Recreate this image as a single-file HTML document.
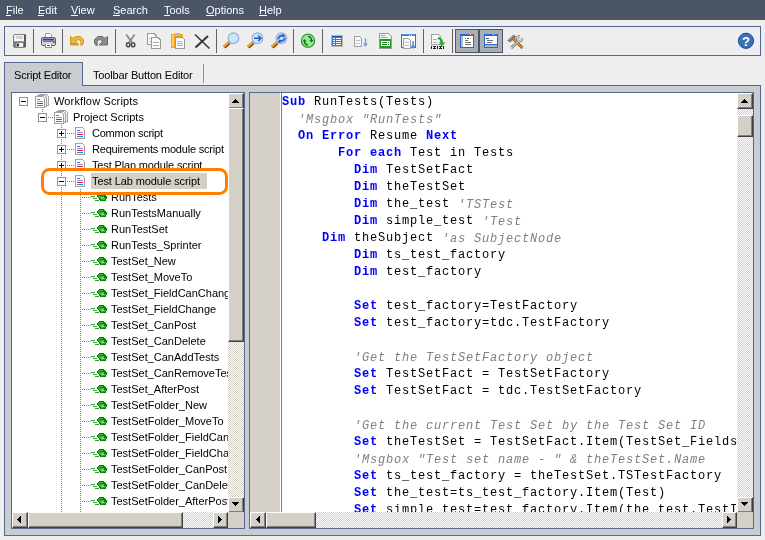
<!DOCTYPE html><html><head><meta charset="utf-8"><style>
*{margin:0;padding:0;box-sizing:border-box}
html,body{width:765px;height:540px;overflow:hidden;background:#eeeeee;font-family:"Liberation Sans",sans-serif;font-size:11px;color:#000}
.a{position:absolute}
#menu{left:0;top:0;width:765px;height:20px;background:#4a5565;color:#fff}
#menu span{position:absolute;top:4px;line-height:12px;will-change:transform}
#menu i{position:absolute;height:1px;background:#fff;top:15px}
.sep{position:absolute;top:29px;width:1px;height:24px;background:#606060}
.t{position:absolute;white-space:nowrap;line-height:16px;height:16px;will-change:transform}
.btn{position:absolute;width:16px;height:16px;background:#d4d0c8;border-top:1px solid #fff;border-left:1px solid #fff;border-right:1px solid #404040;border-bottom:1px solid #404040;box-shadow:inset -1px -1px 0 #808080}
.chk{position:absolute;background:repeating-conic-gradient(#d4d0c8 0 25%,#fff 0 50%) 0 0/2px 2px}
.code{position:absolute;will-change:transform;font-family:"Liberation Mono",monospace;font-size:12px;letter-spacing:0.8px;line-height:17px;white-space:pre}
.k{color:#0000ff;font-weight:bold}
.c{color:#808080;font-style:italic;position:relative;top:1px}
svg{position:absolute;overflow:visible}
</style></head><body><div id="menu" class="a"><span style="left:6px">File</span><i style="left:6px;width:5px"></i><span style="left:38px">Edit</span><i style="left:38px;width:6px"></i><span style="left:71px">View</span><i style="left:71px;width:7px"></i><span style="left:113px">Search</span><i style="left:113px;width:7px"></i><span style="left:164px">Tools</span><i style="left:164px;width:6px"></i><span style="left:206px">Options</span><i style="left:206px;width:8px"></i><span style="left:259px">Help</span><i style="left:259px;width:8px"></i></div><div class="a" style="left:4px;top:26px;width:757px;height:30px;border:1px solid #56688f;background:#eeeeee"></div><div class="sep" style="left:33px"></div><div class="sep" style="left:62px"></div><div class="sep" style="left:115px"></div><div class="sep" style="left:216px"></div><div class="sep" style="left:293px"></div><div class="sep" style="left:322px"></div><div class="sep" style="left:423px"></div><div class="sep" style="left:452px"></div><div class="a" style="left:455px;top:29px;width:48px;height:24px;background:#a9adb4;border:1px solid #4b5567"></div><div class="a" style="left:478px;top:29px;width:2px;height:24px;background:#4b5567"></div>
<svg style="left:0;top:0" width="765" height="60" viewBox="0 0 765 60">
 <!-- save (disabled) -->
 <g shape-rendering="crispEdges">
  <rect x="13" y="34" width="13" height="14" fill="#808080"/>
  <rect x="13" y="34" width="1" height="1" fill="#ececec"/><rect x="25" y="47" width="1" height="1" fill="#ececec"/><rect x="13" y="47" width="1" height="1" fill="#ececec"/>
  <rect x="24" y="35" width="2" height="12" fill="#5a5a5a"/>
  <rect x="14" y="35" width="10" height="6" fill="#f6f6f6"/>
  <rect x="16" y="36" width="7" height="3" fill="#d4d4d4"/>
  <rect x="14" y="41" width="10" height="1" fill="#9a9a9a"/>
  <rect x="16" y="43" width="7" height="4" fill="#f0f0f0"/>
  <rect x="16" y="43" width="3" height="4" fill="#a0a0a0"/>
  <rect x="17" y="44" width="2" height="2" fill="#3a3a3a"/>
 </g>
 <!-- printer -->
 <path d="M45.5 33.5 H50 L51.5 35 V39.5 H45.5 Z" fill="#fff" stroke="#9a9a9a"/>
 <rect x="41.5" y="37.5" width="14" height="8" rx="1.5" fill="#b8b8b8" stroke="#5e5e5e"/>
 <g shape-rendering="crispEdges">
  <rect x="42" y="38" width="13" height="1" fill="#9a9aa8"/>
  <rect x="43" y="39" width="11" height="1" fill="#3c3c78"/>
  <rect x="43" y="40" width="11" height="2" fill="#8470c4"/>
  <rect x="42" y="42" width="13" height="3" fill="#d0d0d0"/>
  <rect x="53" y="41" width="2" height="2" fill="#18c018"/>
  <rect x="45" y="44" width="7" height="4" fill="#fff"/>
  <rect x="45" y="47" width="7" height="1" fill="#8a8a8a"/>
  <rect x="45" y="44" width="1" height="4" fill="#8a8a8a"/><rect x="51" y="44" width="1" height="4" fill="#8a8a8a"/>
  <rect x="47" y="45" width="3" height="1" fill="#505050"/>
 </g>
 <!-- undo -->
 <path d="M70.5 36.5 L73 38.5 L75.5 36.5 L80 36.5 L83.5 39.5 L83.5 43 L81.5 46 L80.5 44.5 L81.2 42 L80 39.8 L77.5 39.8 L75.3 41.3 L79 45 L70.5 45 Z" fill="#eab450" stroke="#d8980c" stroke-width="1" stroke-linejoin="round"/>
 <rect x="71" y="43" width="6.5" height="1.6" fill="#c49070"/>
 <g transform="translate(178 0) scale(-1 1)">
 <path d="M70.5 36.5 L73 38.5 L75.5 36.5 L80 36.5 L83.5 39.5 L83.5 43 L81.5 46 L80.5 44.5 L81.2 42 L80 39.8 L77.5 39.8 L75.3 41.3 L79 45 L70.5 45 Z" fill="#8c8c8c" stroke="#6a6a6a" stroke-width="1" stroke-linejoin="round"/>
 </g>
 <!-- scissors -->
 <g fill="none">
  <path d="M126.2 34.5 L132 42.5" stroke="#8a8a8a" stroke-width="1.8"/>
  <path d="M134.6 34.5 L129 42.5" stroke="#8a8a8a" stroke-width="1.8"/>
  <ellipse cx="128.2" cy="44.8" rx="1.7" ry="2" stroke="#4e4e4e" stroke-width="1.6"/>
  <ellipse cx="133.1" cy="44.8" rx="1.7" ry="2" stroke="#4e4e4e" stroke-width="1.6"/>
 </g>
 <!-- copy -->
 <g shape-rendering="crispEdges">
  <path d="M147.5 33.5 H154 L156.5 36 V44.5 H147.5 Z" fill="#fafafa" stroke="#999"/>
  <path d="M151.5 37.5 H158 L160.5 40 V48.5 H151.5 Z" fill="#fafafa" stroke="#999"/>
  <rect x="153" y="42" width="6" height="1" fill="#b0b0b0"/>
  <rect x="153" y="45" width="6" height="1" fill="#b0b0b0"/>
  <rect x="149" y="38" width="2" height="1" fill="#c0c0c0"/>
  <rect x="149" y="41" width="2" height="1" fill="#c0c0c0"/>
 </g>
 <!-- paste -->
 <g shape-rendering="crispEdges">
  <rect x="171" y="34" width="12" height="14" rx="1" fill="#f0a818"/>
  <rect x="172" y="35" width="2" height="12" fill="#fcd060"/>
  <rect x="175" y="33" width="5" height="3" fill="#b8b8b8"/>
  <path d="M175.5 37.5 H182.5 L184.5 39.5 V48.5 H175.5 Z" fill="#fafafa" stroke="#999"/>
  <rect x="177" y="41" width="5" height="1" fill="#b0b0b0"/>
  <rect x="177" y="43" width="6" height="1" fill="#b0b0b0"/>
  <rect x="177" y="45" width="6" height="1" fill="#b0b0b0"/>
 </g>
 <!-- delete -->
 <path d="M195 34.5 L209.5 48.5" stroke="#333" stroke-width="1.5"/>
 <path d="M208 36 L195.5 47.5" stroke="#333" stroke-width="2"/>
 <!-- magnifiers -->
 <g id="mag">
  <circle cx="233.4" cy="38.3" r="5.3" fill="#c4eafa" stroke="#a8acde" stroke-width="1.3"/>
  <path d="M224.3 47.2 L229.3 42.7" stroke="#6a4010" stroke-width="3.4"/>
  <path d="M224 46.6 L229 42.1" stroke="#f49a2a" stroke-width="2.2"/>
 </g>
 <use href="#mag" x="24"/>
 <path d="M254 38.3 H260.8 M258.2 35.6 L261 38.3 L258.2 41" fill="none" stroke="#1a5ad8" stroke-width="1.4"/>
 <use href="#mag" x="48"/>
 <path d="M278.2 39.5 Q278.5 35.2 283.5 35.6" fill="none" stroke="#2a66d8" stroke-width="2"/>
 <path d="M282.5 33.8 L285.2 35.8 L282.8 37.8 Z" fill="#1850c0"/>
 <path d="M284.8 37.5 Q284.5 41.5 279.5 41.2" fill="none" stroke="#2a66d8" stroke-width="2"/>
 <path d="M280.5 39.2 L277.8 41.2 L280.2 43.2 Z" fill="#1850c0"/>
 <!-- refresh -->
 <circle cx="308" cy="40.8" r="6.6" fill="#98e898" stroke="#3a9a3a" stroke-width="1.3"/>
 <path d="M304.5 41 Q304.5 44.5 308 45" fill="none" stroke="#107010" stroke-width="1.5"/>
 <path d="M302.5 41.5 L304.5 39 L306.5 41.5 Z" fill="#107010"/>
 <path d="M311.5 40.5 Q311.5 37 308 36.5" fill="none" stroke="#107010" stroke-width="1.5"/>
 <path d="M313.5 40 L311.5 42.5 L309.5 40 Z" fill="#107010"/>
 <!-- list -->
 <g shape-rendering="crispEdges">
  <rect x="331" y="35" width="12" height="12" fill="#c0b8a8"/>
  <rect x="332" y="36" width="10" height="10" fill="#1e7ee8"/>
  <rect x="332" y="36" width="10" height="1" fill="#0a5ac8"/>
  <rect x="333" y="38" width="2" height="1" fill="#fff"/><rect x="336" y="38" width="5" height="1" fill="#fff"/>
  <rect x="333" y="40" width="2" height="1" fill="#fff"/><rect x="336" y="40" width="5" height="1" fill="#fff"/>
  <rect x="333" y="42" width="2" height="1" fill="#fff"/><rect x="336" y="42" width="5" height="1" fill="#fff"/>
  <rect x="333" y="44" width="2" height="1" fill="#fff"/><rect x="336" y="44" width="5" height="1" fill="#fff"/>
 </g>
 <!-- doc + arrow -->
 <g shape-rendering="crispEdges">
  <path d="M354.5 36.5 H359.5 L361.5 38.5 V46.5 H354.5 Z" fill="#f8f8f8" stroke="#a0a0a0"/>
  <rect x="356" y="40" width="4" height="1" fill="#c0c0c0"/>
  <rect x="356" y="43" width="4" height="1" fill="#c0c0c0"/>
 </g>
 <path d="M365.5 38.5 V46" stroke="#7aa0d8" stroke-width="1.5"/>
 <path d="M363 43.5 L365.5 47 L368 43.5 Z" fill="#7aa0d8"/>
 <!-- green form -->
 <g shape-rendering="crispEdges">
  <path d="M379.5 33.5 H388.5 L391.5 36.5 V48.5 H379.5 Z" fill="#f6f6f6" stroke="#9a9a9a"/>
  <rect x="381" y="35" width="4" height="1" fill="#a0a0a0"/>
  <rect x="381" y="37" width="6" height="1" fill="#a0a0a0"/>
  <rect x="380" y="39" width="11" height="9" fill="#1c9c1c"/>
  <rect x="381" y="41" width="9" height="5" fill="#fff"/>
  <rect x="382" y="42" width="5" height="1" fill="#207020"/>
  <rect x="382" y="44" width="5" height="1" fill="#207020"/>
  <rect x="388" y="42" width="1" height="1" fill="#207020"/>
  <rect x="388" y="44" width="1" height="1" fill="#207020"/>
 </g>
 <!-- window with doc -->
 <g shape-rendering="crispEdges">
  <rect x="401" y="34" width="15" height="14" fill="#2a6ee0"/>
  <rect x="402" y="36" width="13" height="11" fill="#fff"/>
  <rect x="402" y="34" width="13" height="1" fill="#5a9af0"/>
  <rect x="409" y="35" width="1" height="1" fill="#d8e8ff"/><rect x="411" y="35" width="1" height="1" fill="#d8e8ff"/><rect x="413" y="35" width="2" height="1" fill="#f06030"/>
  <path d="M403.5 38.5 H408.5 L410.5 40.5 V48.5 H403.5 Z" fill="#f8f8f8" stroke="#a0a0a0"/>
  <rect x="405" y="42" width="4" height="1" fill="#c0c0c0"/>
  <rect x="405" y="45" width="4" height="1" fill="#c0c0c0"/>
  <rect x="412" y="41" width="2" height="5" fill="#7aa4e0"/>
 </g>
 <path d="M410.5 45.5 L416.5 45.5 L413 49 Z" fill="#5a8ee0"/>
 <!-- doc green arrow 1010 -->
 <g shape-rendering="crispEdges">
  <path d="M431.5 34.5 H438.5 L440.5 36.5 V44.5 H431.5 Z" fill="#f8f8f8" stroke="#a0a0a0"/>
  <rect x="433" y="39" width="4" height="1" fill="#b0b0b0"/>
  <rect x="433" y="42" width="4" height="1" fill="#b0b0b0"/>
 </g>
 <path d="M438 38 Q442 39 442 43" fill="none" stroke="#20a020" stroke-width="2"/>
 <path d="M438.5 42.5 L442 46.5 L445.5 42.5 Z" fill="#30b030"/>
 <g shape-rendering="crispEdges" fill="#202020">
  <rect x="431" y="46" width="1" height="3"/><rect x="433" y="46" width="3" height="1"/><rect x="433" y="48" width="3" height="1"/><rect x="434" y="47" width="1" height="1"/>
  <rect x="437" y="46" width="1" height="3"/><rect x="439" y="46" width="3" height="1"/><rect x="439" y="48" width="3" height="1"/><rect x="440" y="47" width="1" height="1"/>
  <rect x="443" y="46" width="1" height="3"/>
 </g>
 <!-- pressed window 1 -->
 <g shape-rendering="crispEdges">
  <rect x="460" y="34" width="14" height="14" rx="1" fill="#2a66d0"/>
  <rect x="461" y="36" width="12" height="11" fill="#fff"/>
  <rect x="461" y="36" width="2" height="11" fill="#b8b8c0"/>
  <rect x="470" y="34" width="1" height="1" fill="#e0e8ff"/><rect x="472" y="34" width="1" height="1" fill="#f06030"/>
  <rect x="465" y="38" width="1" height="1" fill="#505050"/><rect x="467" y="38" width="2" height="1" fill="#505050"/>
  <rect x="465" y="40" width="3" height="1" fill="#707070"/>
  <rect x="465" y="42" width="6" height="1" fill="#707070"/>
  <rect x="465" y="44" width="6" height="1" fill="#707070"/>
 </g>
 <!-- pressed window 2 -->
 <g shape-rendering="crispEdges">
  <rect x="484" y="34" width="14" height="14" rx="1" fill="#2a66d0"/>
  <rect x="485" y="36" width="12" height="8" fill="#fff"/>
  <rect x="485" y="45" width="12" height="2" fill="#b4b4b4"/>
  <rect x="493" y="34" width="1" height="1" fill="#e0e8ff"/><rect x="495" y="34" width="1" height="1" fill="#f06030"/>
  <rect x="486" y="38" width="3" height="1" fill="#505050"/>
  <rect x="487" y="40" width="6" height="1" fill="#707070"/>
  <rect x="487" y="42" width="5" height="1" fill="#707070"/>
 </g>
 <!-- tools -->
 <path d="M507 40.5 L513.5 34.5 L516.5 36.5 L510 42.5 Z" fill="#7a7a7a"/>
 <path d="M508.5 40 L513.5 35.5" stroke="#e0e0e0" stroke-width="1" stroke-dasharray="1 1"/>
 <path d="M513 38.5 L522.5 48" stroke="#8a4a00" stroke-width="2.8"/>
 <path d="M513 38.5 L522.5 48" stroke="#e09a30" stroke-width="1.4"/>
 <path d="M518 42 L511 48" stroke="#909090" stroke-width="3"/>
 <path d="M518 42 L511 48" stroke="#f0f0f0" stroke-width="1.2" stroke-dasharray="1 1"/>
 <path d="M522 38 A2.5 2.5 0 1 1 520 36.3" fill="none" stroke="#7a8a7a" stroke-width="2.4"/>
 <path d="M522 38 A2.5 2.5 0 1 1 520 36.3" fill="none" stroke="#e8eee8" stroke-width="1"/>
 <!-- help -->
 <circle cx="746" cy="40.8" r="7.6" fill="#3b72bc" stroke="#1c4c94" stroke-width="1"/>
 <text x="746" y="45.5" text-anchor="middle" font-family="Liberation Sans" font-weight="bold" font-size="13" fill="#fff">?</text>
</svg>
<div class="a" style="left:4px;top:85px;width:757px;height:451px;border:1px solid #56688f;background:#c9ccd1"></div><div class="a" style="left:4px;top:62px;width:79px;height:24px;border:1px solid #56688f;border-bottom:none;background:#c9ccd1"></div><div class="t" style="left:14px;top:67px;letter-spacing:-0.2px">Script Editor</div><div class="t" style="left:93px;top:67px;letter-spacing:-0.15px">Toolbar Button Editor</div><div class="a" style="left:203px;top:64px;width:1px;height:19px;background:#8090b0"></div><div class="a" style="left:11px;top:92px;width:234px;height:437px;border:1px solid #56688f;background:#fff"></div><div class="a" style="left:12px;top:93px;width:232px;height:435px;overflow:hidden"><div class="a" style="left:79px;top:80px;width:116px;height:16px;background:#d4d0c8"></div><svg style="left:0;top:0" width="232" height="435"><g fill="#808080" shape-rendering="crispEdges"><rect x="30" y="16" width="1" height="1"/><rect x="30" y="18" width="1" height="1"/><rect x="49" y="32" width="1" height="1"/><rect x="49" y="34" width="1" height="1"/><rect x="49" y="36" width="1" height="1"/><rect x="49" y="38" width="1" height="1"/><rect x="49" y="40" width="1" height="1"/><rect x="49" y="42" width="1" height="1"/><rect x="49" y="44" width="1" height="1"/><rect x="49" y="46" width="1" height="1"/><rect x="49" y="48" width="1" height="1"/><rect x="49" y="50" width="1" height="1"/><rect x="49" y="52" width="1" height="1"/><rect x="49" y="54" width="1" height="1"/><rect x="49" y="56" width="1" height="1"/><rect x="49" y="58" width="1" height="1"/><rect x="49" y="60" width="1" height="1"/><rect x="49" y="62" width="1" height="1"/><rect x="49" y="64" width="1" height="1"/><rect x="49" y="66" width="1" height="1"/><rect x="49" y="68" width="1" height="1"/><rect x="49" y="70" width="1" height="1"/><rect x="49" y="72" width="1" height="1"/><rect x="49" y="74" width="1" height="1"/><rect x="49" y="76" width="1" height="1"/><rect x="49" y="78" width="1" height="1"/><rect x="49" y="80" width="1" height="1"/><rect x="49" y="82" width="1" height="1"/><rect x="49" y="84" width="1" height="1"/><rect x="49" y="86" width="1" height="1"/><rect x="49" y="88" width="1" height="1"/><rect x="49" y="90" width="1" height="1"/><rect x="49" y="92" width="1" height="1"/><rect x="49" y="94" width="1" height="1"/><rect x="49" y="96" width="1" height="1"/><rect x="49" y="98" width="1" height="1"/><rect x="49" y="100" width="1" height="1"/><rect x="49" y="102" width="1" height="1"/><rect x="49" y="104" width="1" height="1"/><rect x="49" y="106" width="1" height="1"/><rect x="49" y="108" width="1" height="1"/><rect x="49" y="110" width="1" height="1"/><rect x="49" y="112" width="1" height="1"/><rect x="49" y="114" width="1" height="1"/><rect x="49" y="116" width="1" height="1"/><rect x="49" y="118" width="1" height="1"/><rect x="49" y="120" width="1" height="1"/><rect x="49" y="122" width="1" height="1"/><rect x="49" y="124" width="1" height="1"/><rect x="49" y="126" width="1" height="1"/><rect x="49" y="128" width="1" height="1"/><rect x="49" y="130" width="1" height="1"/><rect x="49" y="132" width="1" height="1"/><rect x="49" y="134" width="1" height="1"/><rect x="49" y="136" width="1" height="1"/><rect x="49" y="138" width="1" height="1"/><rect x="49" y="140" width="1" height="1"/><rect x="49" y="142" width="1" height="1"/><rect x="49" y="144" width="1" height="1"/><rect x="49" y="146" width="1" height="1"/><rect x="49" y="148" width="1" height="1"/><rect x="49" y="150" width="1" height="1"/><rect x="49" y="152" width="1" height="1"/><rect x="49" y="154" width="1" height="1"/><rect x="49" y="156" width="1" height="1"/><rect x="49" y="158" width="1" height="1"/><rect x="49" y="160" width="1" height="1"/><rect x="49" y="162" width="1" height="1"/><rect x="49" y="164" width="1" height="1"/><rect x="49" y="166" width="1" height="1"/><rect x="49" y="168" width="1" height="1"/><rect x="49" y="170" width="1" height="1"/><rect x="49" y="172" width="1" height="1"/><rect x="49" y="174" width="1" height="1"/><rect x="49" y="176" width="1" height="1"/><rect x="49" y="178" width="1" height="1"/><rect x="49" y="180" width="1" height="1"/><rect x="49" y="182" width="1" height="1"/><rect x="49" y="184" width="1" height="1"/><rect x="49" y="186" width="1" height="1"/><rect x="49" y="188" width="1" height="1"/><rect x="49" y="190" width="1" height="1"/><rect x="49" y="192" width="1" height="1"/><rect x="49" y="194" width="1" height="1"/><rect x="49" y="196" width="1" height="1"/><rect x="49" y="198" width="1" height="1"/><rect x="49" y="200" width="1" height="1"/><rect x="49" y="202" width="1" height="1"/><rect x="49" y="204" width="1" height="1"/><rect x="49" y="206" width="1" height="1"/><rect x="49" y="208" width="1" height="1"/><rect x="49" y="210" width="1" height="1"/><rect x="49" y="212" width="1" height="1"/><rect x="49" y="214" width="1" height="1"/><rect x="49" y="216" width="1" height="1"/><rect x="49" y="218" width="1" height="1"/><rect x="49" y="220" width="1" height="1"/><rect x="49" y="222" width="1" height="1"/><rect x="49" y="224" width="1" height="1"/><rect x="49" y="226" width="1" height="1"/><rect x="49" y="228" width="1" height="1"/><rect x="49" y="230" width="1" height="1"/><rect x="49" y="232" width="1" height="1"/><rect x="49" y="234" width="1" height="1"/><rect x="49" y="236" width="1" height="1"/><rect x="49" y="238" width="1" height="1"/><rect x="49" y="240" width="1" height="1"/><rect x="49" y="242" width="1" height="1"/><rect x="49" y="244" width="1" height="1"/><rect x="49" y="246" width="1" height="1"/><rect x="49" y="248" width="1" height="1"/><rect x="49" y="250" width="1" height="1"/><rect x="49" y="252" width="1" height="1"/><rect x="49" y="254" width="1" height="1"/><rect x="49" y="256" width="1" height="1"/><rect x="49" y="258" width="1" height="1"/><rect x="49" y="260" width="1" height="1"/><rect x="49" y="262" width="1" height="1"/><rect x="49" y="264" width="1" height="1"/><rect x="49" y="266" width="1" height="1"/><rect x="49" y="268" width="1" height="1"/><rect x="49" y="270" width="1" height="1"/><rect x="49" y="272" width="1" height="1"/><rect x="49" y="274" width="1" height="1"/><rect x="49" y="276" width="1" height="1"/><rect x="49" y="278" width="1" height="1"/><rect x="49" y="280" width="1" height="1"/><rect x="49" y="282" width="1" height="1"/><rect x="49" y="284" width="1" height="1"/><rect x="49" y="286" width="1" height="1"/><rect x="49" y="288" width="1" height="1"/><rect x="49" y="290" width="1" height="1"/><rect x="49" y="292" width="1" height="1"/><rect x="49" y="294" width="1" height="1"/><rect x="49" y="296" width="1" height="1"/><rect x="49" y="298" width="1" height="1"/><rect x="49" y="300" width="1" height="1"/><rect x="49" y="302" width="1" height="1"/><rect x="49" y="304" width="1" height="1"/><rect x="49" y="306" width="1" height="1"/><rect x="49" y="308" width="1" height="1"/><rect x="49" y="310" width="1" height="1"/><rect x="49" y="312" width="1" height="1"/><rect x="49" y="314" width="1" height="1"/><rect x="49" y="316" width="1" height="1"/><rect x="49" y="318" width="1" height="1"/><rect x="49" y="320" width="1" height="1"/><rect x="49" y="322" width="1" height="1"/><rect x="49" y="324" width="1" height="1"/><rect x="49" y="326" width="1" height="1"/><rect x="49" y="328" width="1" height="1"/><rect x="49" y="330" width="1" height="1"/><rect x="49" y="332" width="1" height="1"/><rect x="49" y="334" width="1" height="1"/><rect x="49" y="336" width="1" height="1"/><rect x="49" y="338" width="1" height="1"/><rect x="49" y="340" width="1" height="1"/><rect x="49" y="342" width="1" height="1"/><rect x="49" y="344" width="1" height="1"/><rect x="49" y="346" width="1" height="1"/><rect x="49" y="348" width="1" height="1"/><rect x="49" y="350" width="1" height="1"/><rect x="49" y="352" width="1" height="1"/><rect x="49" y="354" width="1" height="1"/><rect x="49" y="356" width="1" height="1"/><rect x="49" y="358" width="1" height="1"/><rect x="49" y="360" width="1" height="1"/><rect x="49" y="362" width="1" height="1"/><rect x="49" y="364" width="1" height="1"/><rect x="49" y="366" width="1" height="1"/><rect x="49" y="368" width="1" height="1"/><rect x="49" y="370" width="1" height="1"/><rect x="49" y="372" width="1" height="1"/><rect x="49" y="374" width="1" height="1"/><rect x="49" y="376" width="1" height="1"/><rect x="49" y="378" width="1" height="1"/><rect x="49" y="380" width="1" height="1"/><rect x="49" y="382" width="1" height="1"/><rect x="49" y="384" width="1" height="1"/><rect x="49" y="386" width="1" height="1"/><rect x="49" y="388" width="1" height="1"/><rect x="49" y="390" width="1" height="1"/><rect x="49" y="392" width="1" height="1"/><rect x="49" y="394" width="1" height="1"/><rect x="49" y="396" width="1" height="1"/><rect x="49" y="398" width="1" height="1"/><rect x="49" y="400" width="1" height="1"/><rect x="49" y="402" width="1" height="1"/><rect x="49" y="404" width="1" height="1"/><rect x="49" y="406" width="1" height="1"/><rect x="49" y="408" width="1" height="1"/><rect x="49" y="410" width="1" height="1"/><rect x="49" y="412" width="1" height="1"/><rect x="49" y="414" width="1" height="1"/><rect x="49" y="416" width="1" height="1"/><rect x="49" y="418" width="1" height="1"/><rect x="49" y="420" width="1" height="1"/><rect x="49" y="422" width="1" height="1"/><rect x="49" y="424" width="1" height="1"/><rect x="49" y="426" width="1" height="1"/><rect x="49" y="428" width="1" height="1"/><rect x="49" y="430" width="1" height="1"/><rect x="49" y="432" width="1" height="1"/><rect x="49" y="434" width="1" height="1"/><rect x="68" y="96" width="1" height="1"/><rect x="68" y="98" width="1" height="1"/><rect x="68" y="100" width="1" height="1"/><rect x="68" y="102" width="1" height="1"/><rect x="68" y="104" width="1" height="1"/><rect x="68" y="106" width="1" height="1"/><rect x="68" y="108" width="1" height="1"/><rect x="68" y="110" width="1" height="1"/><rect x="68" y="112" width="1" height="1"/><rect x="68" y="114" width="1" height="1"/><rect x="68" y="116" width="1" height="1"/><rect x="68" y="118" width="1" height="1"/><rect x="68" y="120" width="1" height="1"/><rect x="68" y="122" width="1" height="1"/><rect x="68" y="124" width="1" height="1"/><rect x="68" y="126" width="1" height="1"/><rect x="68" y="128" width="1" height="1"/><rect x="68" y="130" width="1" height="1"/><rect x="68" y="132" width="1" height="1"/><rect x="68" y="134" width="1" height="1"/><rect x="68" y="136" width="1" height="1"/><rect x="68" y="138" width="1" height="1"/><rect x="68" y="140" width="1" height="1"/><rect x="68" y="142" width="1" height="1"/><rect x="68" y="144" width="1" height="1"/><rect x="68" y="146" width="1" height="1"/><rect x="68" y="148" width="1" height="1"/><rect x="68" y="150" width="1" height="1"/><rect x="68" y="152" width="1" height="1"/><rect x="68" y="154" width="1" height="1"/><rect x="68" y="156" width="1" height="1"/><rect x="68" y="158" width="1" height="1"/><rect x="68" y="160" width="1" height="1"/><rect x="68" y="162" width="1" height="1"/><rect x="68" y="164" width="1" height="1"/><rect x="68" y="166" width="1" height="1"/><rect x="68" y="168" width="1" height="1"/><rect x="68" y="170" width="1" height="1"/><rect x="68" y="172" width="1" height="1"/><rect x="68" y="174" width="1" height="1"/><rect x="68" y="176" width="1" height="1"/><rect x="68" y="178" width="1" height="1"/><rect x="68" y="180" width="1" height="1"/><rect x="68" y="182" width="1" height="1"/><rect x="68" y="184" width="1" height="1"/><rect x="68" y="186" width="1" height="1"/><rect x="68" y="188" width="1" height="1"/><rect x="68" y="190" width="1" height="1"/><rect x="68" y="192" width="1" height="1"/><rect x="68" y="194" width="1" height="1"/><rect x="68" y="196" width="1" height="1"/><rect x="68" y="198" width="1" height="1"/><rect x="68" y="200" width="1" height="1"/><rect x="68" y="202" width="1" height="1"/><rect x="68" y="204" width="1" height="1"/><rect x="68" y="206" width="1" height="1"/><rect x="68" y="208" width="1" height="1"/><rect x="68" y="210" width="1" height="1"/><rect x="68" y="212" width="1" height="1"/><rect x="68" y="214" width="1" height="1"/><rect x="68" y="216" width="1" height="1"/><rect x="68" y="218" width="1" height="1"/><rect x="68" y="220" width="1" height="1"/><rect x="68" y="222" width="1" height="1"/><rect x="68" y="224" width="1" height="1"/><rect x="68" y="226" width="1" height="1"/><rect x="68" y="228" width="1" height="1"/><rect x="68" y="230" width="1" height="1"/><rect x="68" y="232" width="1" height="1"/><rect x="68" y="234" width="1" height="1"/><rect x="68" y="236" width="1" height="1"/><rect x="68" y="238" width="1" height="1"/><rect x="68" y="240" width="1" height="1"/><rect x="68" y="242" width="1" height="1"/><rect x="68" y="244" width="1" height="1"/><rect x="68" y="246" width="1" height="1"/><rect x="68" y="248" width="1" height="1"/><rect x="68" y="250" width="1" height="1"/><rect x="68" y="252" width="1" height="1"/><rect x="68" y="254" width="1" height="1"/><rect x="68" y="256" width="1" height="1"/><rect x="68" y="258" width="1" height="1"/><rect x="68" y="260" width="1" height="1"/><rect x="68" y="262" width="1" height="1"/><rect x="68" y="264" width="1" height="1"/><rect x="68" y="266" width="1" height="1"/><rect x="68" y="268" width="1" height="1"/><rect x="68" y="270" width="1" height="1"/><rect x="68" y="272" width="1" height="1"/><rect x="68" y="274" width="1" height="1"/><rect x="68" y="276" width="1" height="1"/><rect x="68" y="278" width="1" height="1"/><rect x="68" y="280" width="1" height="1"/><rect x="68" y="282" width="1" height="1"/><rect x="68" y="284" width="1" height="1"/><rect x="68" y="286" width="1" height="1"/><rect x="68" y="288" width="1" height="1"/><rect x="68" y="290" width="1" height="1"/><rect x="68" y="292" width="1" height="1"/><rect x="68" y="294" width="1" height="1"/><rect x="68" y="296" width="1" height="1"/><rect x="68" y="298" width="1" height="1"/><rect x="68" y="300" width="1" height="1"/><rect x="68" y="302" width="1" height="1"/><rect x="68" y="304" width="1" height="1"/><rect x="68" y="306" width="1" height="1"/><rect x="68" y="308" width="1" height="1"/><rect x="68" y="310" width="1" height="1"/><rect x="68" y="312" width="1" height="1"/><rect x="68" y="314" width="1" height="1"/><rect x="68" y="316" width="1" height="1"/><rect x="68" y="318" width="1" height="1"/><rect x="68" y="320" width="1" height="1"/><rect x="68" y="322" width="1" height="1"/><rect x="68" y="324" width="1" height="1"/><rect x="68" y="326" width="1" height="1"/><rect x="68" y="328" width="1" height="1"/><rect x="68" y="330" width="1" height="1"/><rect x="68" y="332" width="1" height="1"/><rect x="68" y="334" width="1" height="1"/><rect x="68" y="336" width="1" height="1"/><rect x="68" y="338" width="1" height="1"/><rect x="68" y="340" width="1" height="1"/><rect x="68" y="342" width="1" height="1"/><rect x="68" y="344" width="1" height="1"/><rect x="68" y="346" width="1" height="1"/><rect x="68" y="348" width="1" height="1"/><rect x="68" y="350" width="1" height="1"/><rect x="68" y="352" width="1" height="1"/><rect x="68" y="354" width="1" height="1"/><rect x="68" y="356" width="1" height="1"/><rect x="68" y="358" width="1" height="1"/><rect x="68" y="360" width="1" height="1"/><rect x="68" y="362" width="1" height="1"/><rect x="68" y="364" width="1" height="1"/><rect x="68" y="366" width="1" height="1"/><rect x="68" y="368" width="1" height="1"/><rect x="68" y="370" width="1" height="1"/><rect x="68" y="372" width="1" height="1"/><rect x="68" y="374" width="1" height="1"/><rect x="68" y="376" width="1" height="1"/><rect x="68" y="378" width="1" height="1"/><rect x="68" y="380" width="1" height="1"/><rect x="68" y="382" width="1" height="1"/><rect x="68" y="384" width="1" height="1"/><rect x="68" y="386" width="1" height="1"/><rect x="68" y="388" width="1" height="1"/><rect x="68" y="390" width="1" height="1"/><rect x="68" y="392" width="1" height="1"/><rect x="68" y="394" width="1" height="1"/><rect x="68" y="396" width="1" height="1"/><rect x="68" y="398" width="1" height="1"/><rect x="68" y="400" width="1" height="1"/><rect x="68" y="402" width="1" height="1"/><rect x="68" y="404" width="1" height="1"/><rect x="68" y="406" width="1" height="1"/><rect x="68" y="408" width="1" height="1"/><rect x="68" y="410" width="1" height="1"/><rect x="68" y="412" width="1" height="1"/><rect x="68" y="414" width="1" height="1"/><rect x="68" y="416" width="1" height="1"/><rect x="68" y="418" width="1" height="1"/><rect x="68" y="420" width="1" height="1"/><rect x="68" y="422" width="1" height="1"/><rect x="68" y="424" width="1" height="1"/><rect x="68" y="426" width="1" height="1"/><rect x="68" y="428" width="1" height="1"/><rect x="68" y="430" width="1" height="1"/><rect x="68" y="432" width="1" height="1"/><rect x="68" y="434" width="1" height="1"/><rect x="7.5" y="4.5" width="8" height="8" fill="#fff" stroke="#919191"/><rect x="9" y="8" width="5" height="1" fill="#000"/><rect x="26.5" y="20.5" width="8" height="8" fill="#fff" stroke="#919191"/><rect x="28" y="24" width="5" height="1" fill="#000"/><rect x="36" y="24" width="1" height="1"/><rect x="38" y="24" width="1" height="1"/><rect x="40" y="24" width="1" height="1"/><rect x="45.5" y="36.5" width="8" height="8" fill="#fff" stroke="#919191"/><rect x="47" y="40" width="5" height="1" fill="#000"/><rect x="49" y="38" width="1" height="5" fill="#000"/><rect x="55" y="40" width="1" height="1"/><rect x="57" y="40" width="1" height="1"/><rect x="59" y="40" width="1" height="1"/><rect x="61" y="40" width="1" height="1"/><rect x="45.5" y="52.5" width="8" height="8" fill="#fff" stroke="#919191"/><rect x="47" y="56" width="5" height="1" fill="#000"/><rect x="49" y="54" width="1" height="5" fill="#000"/><rect x="55" y="56" width="1" height="1"/><rect x="57" y="56" width="1" height="1"/><rect x="59" y="56" width="1" height="1"/><rect x="61" y="56" width="1" height="1"/><rect x="45.5" y="68.5" width="8" height="8" fill="#fff" stroke="#919191"/><rect x="47" y="72" width="5" height="1" fill="#000"/><rect x="49" y="70" width="1" height="5" fill="#000"/><rect x="55" y="72" width="1" height="1"/><rect x="57" y="72" width="1" height="1"/><rect x="59" y="72" width="1" height="1"/><rect x="61" y="72" width="1" height="1"/><rect x="45.5" y="84.5" width="8" height="8" fill="#fff" stroke="#919191"/><rect x="47" y="88" width="5" height="1" fill="#000"/><rect x="55" y="88" width="1" height="1"/><rect x="57" y="88" width="1" height="1"/><rect x="59" y="88" width="1" height="1"/><rect x="61" y="88" width="1" height="1"/><rect x="70" y="104" width="1" height="1"/><rect x="72" y="104" width="1" height="1"/><rect x="74" y="104" width="1" height="1"/><rect x="76" y="104" width="1" height="1"/><rect x="78" y="104" width="1" height="1"/><rect x="70" y="120" width="1" height="1"/><rect x="72" y="120" width="1" height="1"/><rect x="74" y="120" width="1" height="1"/><rect x="76" y="120" width="1" height="1"/><rect x="78" y="120" width="1" height="1"/><rect x="70" y="136" width="1" height="1"/><rect x="72" y="136" width="1" height="1"/><rect x="74" y="136" width="1" height="1"/><rect x="76" y="136" width="1" height="1"/><rect x="78" y="136" width="1" height="1"/><rect x="70" y="152" width="1" height="1"/><rect x="72" y="152" width="1" height="1"/><rect x="74" y="152" width="1" height="1"/><rect x="76" y="152" width="1" height="1"/><rect x="78" y="152" width="1" height="1"/><rect x="70" y="168" width="1" height="1"/><rect x="72" y="168" width="1" height="1"/><rect x="74" y="168" width="1" height="1"/><rect x="76" y="168" width="1" height="1"/><rect x="78" y="168" width="1" height="1"/><rect x="70" y="184" width="1" height="1"/><rect x="72" y="184" width="1" height="1"/><rect x="74" y="184" width="1" height="1"/><rect x="76" y="184" width="1" height="1"/><rect x="78" y="184" width="1" height="1"/><rect x="70" y="200" width="1" height="1"/><rect x="72" y="200" width="1" height="1"/><rect x="74" y="200" width="1" height="1"/><rect x="76" y="200" width="1" height="1"/><rect x="78" y="200" width="1" height="1"/><rect x="70" y="216" width="1" height="1"/><rect x="72" y="216" width="1" height="1"/><rect x="74" y="216" width="1" height="1"/><rect x="76" y="216" width="1" height="1"/><rect x="78" y="216" width="1" height="1"/><rect x="70" y="232" width="1" height="1"/><rect x="72" y="232" width="1" height="1"/><rect x="74" y="232" width="1" height="1"/><rect x="76" y="232" width="1" height="1"/><rect x="78" y="232" width="1" height="1"/><rect x="70" y="248" width="1" height="1"/><rect x="72" y="248" width="1" height="1"/><rect x="74" y="248" width="1" height="1"/><rect x="76" y="248" width="1" height="1"/><rect x="78" y="248" width="1" height="1"/><rect x="70" y="264" width="1" height="1"/><rect x="72" y="264" width="1" height="1"/><rect x="74" y="264" width="1" height="1"/><rect x="76" y="264" width="1" height="1"/><rect x="78" y="264" width="1" height="1"/><rect x="70" y="280" width="1" height="1"/><rect x="72" y="280" width="1" height="1"/><rect x="74" y="280" width="1" height="1"/><rect x="76" y="280" width="1" height="1"/><rect x="78" y="280" width="1" height="1"/><rect x="70" y="296" width="1" height="1"/><rect x="72" y="296" width="1" height="1"/><rect x="74" y="296" width="1" height="1"/><rect x="76" y="296" width="1" height="1"/><rect x="78" y="296" width="1" height="1"/><rect x="70" y="312" width="1" height="1"/><rect x="72" y="312" width="1" height="1"/><rect x="74" y="312" width="1" height="1"/><rect x="76" y="312" width="1" height="1"/><rect x="78" y="312" width="1" height="1"/><rect x="70" y="328" width="1" height="1"/><rect x="72" y="328" width="1" height="1"/><rect x="74" y="328" width="1" height="1"/><rect x="76" y="328" width="1" height="1"/><rect x="78" y="328" width="1" height="1"/><rect x="70" y="344" width="1" height="1"/><rect x="72" y="344" width="1" height="1"/><rect x="74" y="344" width="1" height="1"/><rect x="76" y="344" width="1" height="1"/><rect x="78" y="344" width="1" height="1"/><rect x="70" y="360" width="1" height="1"/><rect x="72" y="360" width="1" height="1"/><rect x="74" y="360" width="1" height="1"/><rect x="76" y="360" width="1" height="1"/><rect x="78" y="360" width="1" height="1"/><rect x="70" y="376" width="1" height="1"/><rect x="72" y="376" width="1" height="1"/><rect x="74" y="376" width="1" height="1"/><rect x="76" y="376" width="1" height="1"/><rect x="78" y="376" width="1" height="1"/><rect x="70" y="392" width="1" height="1"/><rect x="72" y="392" width="1" height="1"/><rect x="74" y="392" width="1" height="1"/><rect x="76" y="392" width="1" height="1"/><rect x="78" y="392" width="1" height="1"/><rect x="70" y="408" width="1" height="1"/><rect x="72" y="408" width="1" height="1"/><rect x="74" y="408" width="1" height="1"/><rect x="76" y="408" width="1" height="1"/><rect x="78" y="408" width="1" height="1"/><rect x="70" y="424" width="1" height="1"/><rect x="72" y="424" width="1" height="1"/><rect x="74" y="424" width="1" height="1"/><rect x="76" y="424" width="1" height="1"/><rect x="78" y="424" width="1" height="1"/><path d="M27.5 1.5 H34.5 L36.5 3.5 V12.5 H27.5 Z" fill="#f0f0f0" stroke="#a2a2a2"/><path d="M25.5 2.5 H32.5 L34.5 4.5 V13.5 H25.5 Z" fill="#f0f0f0" stroke="#a2a2a2"/><path d="M23.5 3.5 H30.5 L32.5 5.5 V14.5 H23.5 Z" fill="#fff" stroke="#a2a2a2"/><rect x="25" y="6" width="3" height="1" fill="#1a8cff"/><rect x="25" y="8" width="6" height="1" fill="#9a90f0"/><rect x="25" y="10" width="6" height="1" fill="#f01818"/><rect x="25" y="12" width="6" height="1" fill="#1a8cff"/><path d="M46.5 17.5 H53.5 L55.5 19.5 V28.5 H46.5 Z" fill="#f0f0f0" stroke="#a2a2a2"/><path d="M44.5 18.5 H51.5 L53.5 20.5 V29.5 H44.5 Z" fill="#f0f0f0" stroke="#a2a2a2"/><path d="M42.5 19.5 H49.5 L51.5 21.5 V30.5 H42.5 Z" fill="#fff" stroke="#a2a2a2"/><rect x="44" y="22" width="3" height="1" fill="#1a8cff"/><rect x="44" y="24" width="6" height="1" fill="#9a90f0"/><rect x="44" y="26" width="6" height="1" fill="#f01818"/><rect x="44" y="28" width="6" height="1" fill="#1a8cff"/><path d="M63.5 34.5 H70.5 L72.5 36.5 V45.5 H63.5 Z" fill="#fff" stroke="#a2a2a2"/><rect x="65" y="37" width="3" height="1" fill="#1a8cff"/><rect x="65" y="39" width="6" height="1" fill="#9a90f0"/><rect x="65" y="41" width="6" height="1" fill="#f01818"/><rect x="65" y="43" width="6" height="1" fill="#1a8cff"/><path d="M63.5 50.5 H70.5 L72.5 52.5 V61.5 H63.5 Z" fill="#fff" stroke="#a2a2a2"/><rect x="65" y="53" width="3" height="1" fill="#1a8cff"/><rect x="65" y="55" width="6" height="1" fill="#9a90f0"/><rect x="65" y="57" width="6" height="1" fill="#f01818"/><rect x="65" y="59" width="6" height="1" fill="#1a8cff"/><path d="M63.5 66.5 H70.5 L72.5 68.5 V77.5 H63.5 Z" fill="#fff" stroke="#a2a2a2"/><rect x="65" y="69" width="3" height="1" fill="#1a8cff"/><rect x="65" y="71" width="6" height="1" fill="#9a90f0"/><rect x="65" y="73" width="6" height="1" fill="#f01818"/><rect x="65" y="75" width="6" height="1" fill="#1a8cff"/><path d="M63.5 82.5 H70.5 L72.5 84.5 V93.5 H63.5 Z" fill="#fff" stroke="#a2a2a2"/><rect x="65" y="85" width="3" height="1" fill="#1a8cff"/><rect x="65" y="87" width="6" height="1" fill="#9a90f0"/><rect x="65" y="89" width="6" height="1" fill="#f01818"/><rect x="65" y="91" width="6" height="1" fill="#1a8cff"/><rect x="79" y="103" width="4" height="1" fill="#30a030"/><rect x="81" y="105" width="4" height="1" fill="#30a030"/><rect x="83" y="107" width="4" height="1" fill="#30a030"/><path d="M87.5 100.5 L91 100.5 L95 104.5 L93 107.5 L89 107.5 L85 103 Z" fill="#34b034" stroke="#0a7a0a" stroke-width="1" stroke-linejoin="round"/><path d="M86.5 102.5 L91.5 102.5 L93.5 105" fill="none" stroke="#128a12" stroke-width="1"/><rect x="89" y="104" width="3" height="2" fill="#6cd06c"/><rect x="79" y="119" width="4" height="1" fill="#30a030"/><rect x="81" y="121" width="4" height="1" fill="#30a030"/><rect x="83" y="123" width="4" height="1" fill="#30a030"/><path d="M87.5 116.5 L91 116.5 L95 120.5 L93 123.5 L89 123.5 L85 119 Z" fill="#34b034" stroke="#0a7a0a" stroke-width="1" stroke-linejoin="round"/><path d="M86.5 118.5 L91.5 118.5 L93.5 121" fill="none" stroke="#128a12" stroke-width="1"/><rect x="89" y="120" width="3" height="2" fill="#6cd06c"/><rect x="79" y="135" width="4" height="1" fill="#30a030"/><rect x="81" y="137" width="4" height="1" fill="#30a030"/><rect x="83" y="139" width="4" height="1" fill="#30a030"/><path d="M87.5 132.5 L91 132.5 L95 136.5 L93 139.5 L89 139.5 L85 135 Z" fill="#34b034" stroke="#0a7a0a" stroke-width="1" stroke-linejoin="round"/><path d="M86.5 134.5 L91.5 134.5 L93.5 137" fill="none" stroke="#128a12" stroke-width="1"/><rect x="89" y="136" width="3" height="2" fill="#6cd06c"/><rect x="79" y="151" width="4" height="1" fill="#30a030"/><rect x="81" y="153" width="4" height="1" fill="#30a030"/><rect x="83" y="155" width="4" height="1" fill="#30a030"/><path d="M87.5 148.5 L91 148.5 L95 152.5 L93 155.5 L89 155.5 L85 151 Z" fill="#34b034" stroke="#0a7a0a" stroke-width="1" stroke-linejoin="round"/><path d="M86.5 150.5 L91.5 150.5 L93.5 153" fill="none" stroke="#128a12" stroke-width="1"/><rect x="89" y="152" width="3" height="2" fill="#6cd06c"/><rect x="79" y="167" width="4" height="1" fill="#30a030"/><rect x="81" y="169" width="4" height="1" fill="#30a030"/><rect x="83" y="171" width="4" height="1" fill="#30a030"/><path d="M87.5 164.5 L91 164.5 L95 168.5 L93 171.5 L89 171.5 L85 167 Z" fill="#34b034" stroke="#0a7a0a" stroke-width="1" stroke-linejoin="round"/><path d="M86.5 166.5 L91.5 166.5 L93.5 169" fill="none" stroke="#128a12" stroke-width="1"/><rect x="89" y="168" width="3" height="2" fill="#6cd06c"/><rect x="79" y="183" width="4" height="1" fill="#30a030"/><rect x="81" y="185" width="4" height="1" fill="#30a030"/><rect x="83" y="187" width="4" height="1" fill="#30a030"/><path d="M87.5 180.5 L91 180.5 L95 184.5 L93 187.5 L89 187.5 L85 183 Z" fill="#34b034" stroke="#0a7a0a" stroke-width="1" stroke-linejoin="round"/><path d="M86.5 182.5 L91.5 182.5 L93.5 185" fill="none" stroke="#128a12" stroke-width="1"/><rect x="89" y="184" width="3" height="2" fill="#6cd06c"/><rect x="79" y="199" width="4" height="1" fill="#30a030"/><rect x="81" y="201" width="4" height="1" fill="#30a030"/><rect x="83" y="203" width="4" height="1" fill="#30a030"/><path d="M87.5 196.5 L91 196.5 L95 200.5 L93 203.5 L89 203.5 L85 199 Z" fill="#34b034" stroke="#0a7a0a" stroke-width="1" stroke-linejoin="round"/><path d="M86.5 198.5 L91.5 198.5 L93.5 201" fill="none" stroke="#128a12" stroke-width="1"/><rect x="89" y="200" width="3" height="2" fill="#6cd06c"/><rect x="79" y="215" width="4" height="1" fill="#30a030"/><rect x="81" y="217" width="4" height="1" fill="#30a030"/><rect x="83" y="219" width="4" height="1" fill="#30a030"/><path d="M87.5 212.5 L91 212.5 L95 216.5 L93 219.5 L89 219.5 L85 215 Z" fill="#34b034" stroke="#0a7a0a" stroke-width="1" stroke-linejoin="round"/><path d="M86.5 214.5 L91.5 214.5 L93.5 217" fill="none" stroke="#128a12" stroke-width="1"/><rect x="89" y="216" width="3" height="2" fill="#6cd06c"/><rect x="79" y="231" width="4" height="1" fill="#30a030"/><rect x="81" y="233" width="4" height="1" fill="#30a030"/><rect x="83" y="235" width="4" height="1" fill="#30a030"/><path d="M87.5 228.5 L91 228.5 L95 232.5 L93 235.5 L89 235.5 L85 231 Z" fill="#34b034" stroke="#0a7a0a" stroke-width="1" stroke-linejoin="round"/><path d="M86.5 230.5 L91.5 230.5 L93.5 233" fill="none" stroke="#128a12" stroke-width="1"/><rect x="89" y="232" width="3" height="2" fill="#6cd06c"/><rect x="79" y="247" width="4" height="1" fill="#30a030"/><rect x="81" y="249" width="4" height="1" fill="#30a030"/><rect x="83" y="251" width="4" height="1" fill="#30a030"/><path d="M87.5 244.5 L91 244.5 L95 248.5 L93 251.5 L89 251.5 L85 247 Z" fill="#34b034" stroke="#0a7a0a" stroke-width="1" stroke-linejoin="round"/><path d="M86.5 246.5 L91.5 246.5 L93.5 249" fill="none" stroke="#128a12" stroke-width="1"/><rect x="89" y="248" width="3" height="2" fill="#6cd06c"/><rect x="79" y="263" width="4" height="1" fill="#30a030"/><rect x="81" y="265" width="4" height="1" fill="#30a030"/><rect x="83" y="267" width="4" height="1" fill="#30a030"/><path d="M87.5 260.5 L91 260.5 L95 264.5 L93 267.5 L89 267.5 L85 263 Z" fill="#34b034" stroke="#0a7a0a" stroke-width="1" stroke-linejoin="round"/><path d="M86.5 262.5 L91.5 262.5 L93.5 265" fill="none" stroke="#128a12" stroke-width="1"/><rect x="89" y="264" width="3" height="2" fill="#6cd06c"/><rect x="79" y="279" width="4" height="1" fill="#30a030"/><rect x="81" y="281" width="4" height="1" fill="#30a030"/><rect x="83" y="283" width="4" height="1" fill="#30a030"/><path d="M87.5 276.5 L91 276.5 L95 280.5 L93 283.5 L89 283.5 L85 279 Z" fill="#34b034" stroke="#0a7a0a" stroke-width="1" stroke-linejoin="round"/><path d="M86.5 278.5 L91.5 278.5 L93.5 281" fill="none" stroke="#128a12" stroke-width="1"/><rect x="89" y="280" width="3" height="2" fill="#6cd06c"/><rect x="79" y="295" width="4" height="1" fill="#30a030"/><rect x="81" y="297" width="4" height="1" fill="#30a030"/><rect x="83" y="299" width="4" height="1" fill="#30a030"/><path d="M87.5 292.5 L91 292.5 L95 296.5 L93 299.5 L89 299.5 L85 295 Z" fill="#34b034" stroke="#0a7a0a" stroke-width="1" stroke-linejoin="round"/><path d="M86.5 294.5 L91.5 294.5 L93.5 297" fill="none" stroke="#128a12" stroke-width="1"/><rect x="89" y="296" width="3" height="2" fill="#6cd06c"/><rect x="79" y="311" width="4" height="1" fill="#30a030"/><rect x="81" y="313" width="4" height="1" fill="#30a030"/><rect x="83" y="315" width="4" height="1" fill="#30a030"/><path d="M87.5 308.5 L91 308.5 L95 312.5 L93 315.5 L89 315.5 L85 311 Z" fill="#34b034" stroke="#0a7a0a" stroke-width="1" stroke-linejoin="round"/><path d="M86.5 310.5 L91.5 310.5 L93.5 313" fill="none" stroke="#128a12" stroke-width="1"/><rect x="89" y="312" width="3" height="2" fill="#6cd06c"/><rect x="79" y="327" width="4" height="1" fill="#30a030"/><rect x="81" y="329" width="4" height="1" fill="#30a030"/><rect x="83" y="331" width="4" height="1" fill="#30a030"/><path d="M87.5 324.5 L91 324.5 L95 328.5 L93 331.5 L89 331.5 L85 327 Z" fill="#34b034" stroke="#0a7a0a" stroke-width="1" stroke-linejoin="round"/><path d="M86.5 326.5 L91.5 326.5 L93.5 329" fill="none" stroke="#128a12" stroke-width="1"/><rect x="89" y="328" width="3" height="2" fill="#6cd06c"/><rect x="79" y="343" width="4" height="1" fill="#30a030"/><rect x="81" y="345" width="4" height="1" fill="#30a030"/><rect x="83" y="347" width="4" height="1" fill="#30a030"/><path d="M87.5 340.5 L91 340.5 L95 344.5 L93 347.5 L89 347.5 L85 343 Z" fill="#34b034" stroke="#0a7a0a" stroke-width="1" stroke-linejoin="round"/><path d="M86.5 342.5 L91.5 342.5 L93.5 345" fill="none" stroke="#128a12" stroke-width="1"/><rect x="89" y="344" width="3" height="2" fill="#6cd06c"/><rect x="79" y="359" width="4" height="1" fill="#30a030"/><rect x="81" y="361" width="4" height="1" fill="#30a030"/><rect x="83" y="363" width="4" height="1" fill="#30a030"/><path d="M87.5 356.5 L91 356.5 L95 360.5 L93 363.5 L89 363.5 L85 359 Z" fill="#34b034" stroke="#0a7a0a" stroke-width="1" stroke-linejoin="round"/><path d="M86.5 358.5 L91.5 358.5 L93.5 361" fill="none" stroke="#128a12" stroke-width="1"/><rect x="89" y="360" width="3" height="2" fill="#6cd06c"/><rect x="79" y="375" width="4" height="1" fill="#30a030"/><rect x="81" y="377" width="4" height="1" fill="#30a030"/><rect x="83" y="379" width="4" height="1" fill="#30a030"/><path d="M87.5 372.5 L91 372.5 L95 376.5 L93 379.5 L89 379.5 L85 375 Z" fill="#34b034" stroke="#0a7a0a" stroke-width="1" stroke-linejoin="round"/><path d="M86.5 374.5 L91.5 374.5 L93.5 377" fill="none" stroke="#128a12" stroke-width="1"/><rect x="89" y="376" width="3" height="2" fill="#6cd06c"/><rect x="79" y="391" width="4" height="1" fill="#30a030"/><rect x="81" y="393" width="4" height="1" fill="#30a030"/><rect x="83" y="395" width="4" height="1" fill="#30a030"/><path d="M87.5 388.5 L91 388.5 L95 392.5 L93 395.5 L89 395.5 L85 391 Z" fill="#34b034" stroke="#0a7a0a" stroke-width="1" stroke-linejoin="round"/><path d="M86.5 390.5 L91.5 390.5 L93.5 393" fill="none" stroke="#128a12" stroke-width="1"/><rect x="89" y="392" width="3" height="2" fill="#6cd06c"/><rect x="79" y="407" width="4" height="1" fill="#30a030"/><rect x="81" y="409" width="4" height="1" fill="#30a030"/><rect x="83" y="411" width="4" height="1" fill="#30a030"/><path d="M87.5 404.5 L91 404.5 L95 408.5 L93 411.5 L89 411.5 L85 407 Z" fill="#34b034" stroke="#0a7a0a" stroke-width="1" stroke-linejoin="round"/><path d="M86.5 406.5 L91.5 406.5 L93.5 409" fill="none" stroke="#128a12" stroke-width="1"/><rect x="89" y="408" width="3" height="2" fill="#6cd06c"/><rect x="79" y="423" width="4" height="1" fill="#30a030"/><rect x="81" y="425" width="4" height="1" fill="#30a030"/><rect x="83" y="427" width="4" height="1" fill="#30a030"/><path d="M87.5 420.5 L91 420.5 L95 424.5 L93 427.5 L89 427.5 L85 423 Z" fill="#34b034" stroke="#0a7a0a" stroke-width="1" stroke-linejoin="round"/><path d="M86.5 422.5 L91.5 422.5 L93.5 425" fill="none" stroke="#128a12" stroke-width="1"/><rect x="89" y="424" width="3" height="2" fill="#6cd06c"/></g></svg><div class="t" style="left:42px;top:0px;letter-spacing:0.15px">Workflow Scripts</div><div class="t" style="left:61px;top:16px;letter-spacing:0px">Project Scripts</div><div class="t" style="left:80px;top:32px;letter-spacing:-0.25px">Common script</div><div class="t" style="left:80px;top:48px;letter-spacing:-0.2px">Requirements module script</div><div class="t" style="left:80px;top:64px;letter-spacing:-0.15px">Test Plan module script</div><div class="t" style="left:80px;top:80px;letter-spacing:-0.1px">Test Lab module script</div><div class="t" style="left:99px;top:96px;letter-spacing:0px">RunTests</div><div class="t" style="left:99px;top:112px;letter-spacing:0px">RunTestsManually</div><div class="t" style="left:99px;top:128px;letter-spacing:0px">RunTestSet</div><div class="t" style="left:99px;top:144px;letter-spacing:0px">RunTests_Sprinter</div><div class="t" style="left:99px;top:160px;letter-spacing:0px">TestSet_New</div><div class="t" style="left:99px;top:176px;letter-spacing:0px">TestSet_MoveTo</div><div class="t" style="left:99px;top:192px;letter-spacing:0px">TestSet_FieldCanChange</div><div class="t" style="left:99px;top:208px;letter-spacing:0px">TestSet_FieldChange</div><div class="t" style="left:99px;top:224px;letter-spacing:0px">TestSet_CanPost</div><div class="t" style="left:99px;top:240px;letter-spacing:0px">TestSet_CanDelete</div><div class="t" style="left:99px;top:256px;letter-spacing:0px">TestSet_CanAddTests</div><div class="t" style="left:99px;top:272px;letter-spacing:0px">TestSet_CanRemoveTests</div><div class="t" style="left:99px;top:288px;letter-spacing:0px">TestSet_AfterPost</div><div class="t" style="left:99px;top:304px;letter-spacing:0px">TestSetFolder_New</div><div class="t" style="left:99px;top:320px;letter-spacing:0px">TestSetFolder_MoveTo</div><div class="t" style="left:99px;top:336px;letter-spacing:0px">TestSetFolder_FieldCanChange</div><div class="t" style="left:99px;top:352px;letter-spacing:0px">TestSetFolder_FieldChange</div><div class="t" style="left:99px;top:368px;letter-spacing:0px">TestSetFolder_CanPost</div><div class="t" style="left:99px;top:384px;letter-spacing:0px">TestSetFolder_CanDelete</div><div class="t" style="left:99px;top:400px;letter-spacing:0px">TestSetFolder_AfterPost</div><div class="t" style="left:99px;top:416px;letter-spacing:0px">TestSetFolder_BeforePost</div></div><div class="chk" style="left:228px;top:93px;width:16px;height:419px"></div><div class="btn" style="left:228px;top:93px"></div><div class="btn" style="left:228px;top:108px;height:234px"></div><div class="btn" style="left:228px;top:497px"></div><div class="chk" style="left:12px;top:512px;width:216px;height:16px"></div><div class="btn" style="left:12px;top:512px"></div><div class="btn" style="left:28px;top:512px;width:155px"></div><div class="btn" style="left:213px;top:512px;width:15px"></div><div class="a" style="left:228px;top:512px;width:16px;height:16px;background:#d4d0c8"></div><div class="a" style="left:249px;top:92px;width:505px;height:437px;border:1px solid #56688f;background:#fff"></div><div class="a" style="left:250px;top:93px;width:30px;height:419px;background:#d4d0c8"></div><div class="a" style="left:280px;top:93px;width:1px;height:419px;background:#fff"></div><div class="a" style="left:281px;top:93px;width:1px;height:419px;background:#808080"></div><div class="a" style="left:281px;top:93px;width:456px;height:419px;overflow:hidden"><div class="code" style="left:1px;top:1px"><span class="k">Sub</span> RunTests(Tests)
  <span class="c">'Msgbox "RunTests"</span>
  <span class="k">On Error</span> Resume <span class="k">Next</span>
       <span class="k">For each</span> Test in Tests
         <span class="k">Dim</span> TestSetFact
         <span class="k">Dim</span> theTestSet
         <span class="k">Dim</span> the_test <span class="c">'TSTest</span>
         <span class="k">Dim</span> simple_test <span class="c">'Test</span>
     <span class="k">Dim</span> theSubject <span class="c">'as SubjectNode</span>
         <span class="k">Dim</span> ts_test_factory
         <span class="k">Dim</span> test_factory

         <span class="k">Set</span> test_factory=TestFactory
         <span class="k">Set</span> test_factory=tdc.TestFactory

         <span class="c">'Get the TestSetFactory object</span>
         <span class="k">Set</span> TestSetFact = TestSetFactory
         <span class="k">Set</span> TestSetFact = tdc.TestSetFactory

         <span class="c">'Get the current Test Set by the Test Set ID</span>
         <span class="k">Set</span> theTestSet = TestSetFact.Item(TestSet_Fields("CY_CYCLE_ID").Value)
         <span class="c">'Msgbox "Test set name - " &amp; theTestSet.Name</span>
         <span class="k">Set</span> ts_test_factory = theTestSet.TSTestFactory
         <span class="k">Set</span> the_test=ts_test_factory.Item(Test)
         <span class="k">Set</span> simple_test=test_factory.Item(the_test.TestID)</div></div><div class="chk" style="left:737px;top:93px;width:16px;height:419px"></div><div class="btn" style="left:737px;top:93px"></div><div class="btn" style="left:737px;top:115px;height:22px"></div><div class="btn" style="left:737px;top:497px"></div><div class="chk" style="left:250px;top:512px;width:487px;height:16px"></div><div class="btn" style="left:250px;top:512px"></div><div class="btn" style="left:266px;top:512px;width:50px"></div><div class="btn" style="left:722px;top:512px;width:15px"></div><div class="a" style="left:737px;top:512px;width:16px;height:16px;background:#d4d0c8"></div><svg style="left:0;top:0" width="765" height="540"><g fill="#000" shape-rendering="crispEdges">
<rect x="235" y="99" width="1" height="1"/><rect x="234" y="100" width="3" height="1"/><rect x="233" y="101" width="5" height="1"/><rect x="232" y="102" width="7" height="1"/><rect x="232" y="502" width="7" height="1"/><rect x="233" y="503" width="5" height="1"/><rect x="234" y="504" width="3" height="1"/><rect x="235" y="505" width="1" height="1"/><rect x="17" y="519" width="1" height="1"/><rect x="18" y="518" width="1" height="3"/><rect x="19" y="517" width="1" height="5"/><rect x="20" y="516" width="1" height="7"/><rect x="218" y="516" width="1" height="7"/><rect x="219" y="517" width="1" height="5"/><rect x="220" y="518" width="1" height="3"/><rect x="221" y="519" width="1" height="1"/><rect x="744" y="99" width="1" height="1"/><rect x="743" y="100" width="3" height="1"/><rect x="742" y="101" width="5" height="1"/><rect x="741" y="102" width="7" height="1"/><rect x="741" y="502" width="7" height="1"/><rect x="742" y="503" width="5" height="1"/><rect x="743" y="504" width="3" height="1"/><rect x="744" y="505" width="1" height="1"/><rect x="256" y="519" width="1" height="1"/><rect x="257" y="518" width="1" height="3"/><rect x="258" y="517" width="1" height="5"/><rect x="259" y="516" width="1" height="7"/><rect x="727" y="516" width="1" height="7"/><rect x="728" y="517" width="1" height="5"/><rect x="729" y="518" width="1" height="3"/><rect x="730" y="519" width="1" height="1"/></g>
<rect x="42.5" y="169.5" width="184" height="24" rx="7" fill="none" stroke="#ff7f00" stroke-width="3"/>
</svg></body></html>
